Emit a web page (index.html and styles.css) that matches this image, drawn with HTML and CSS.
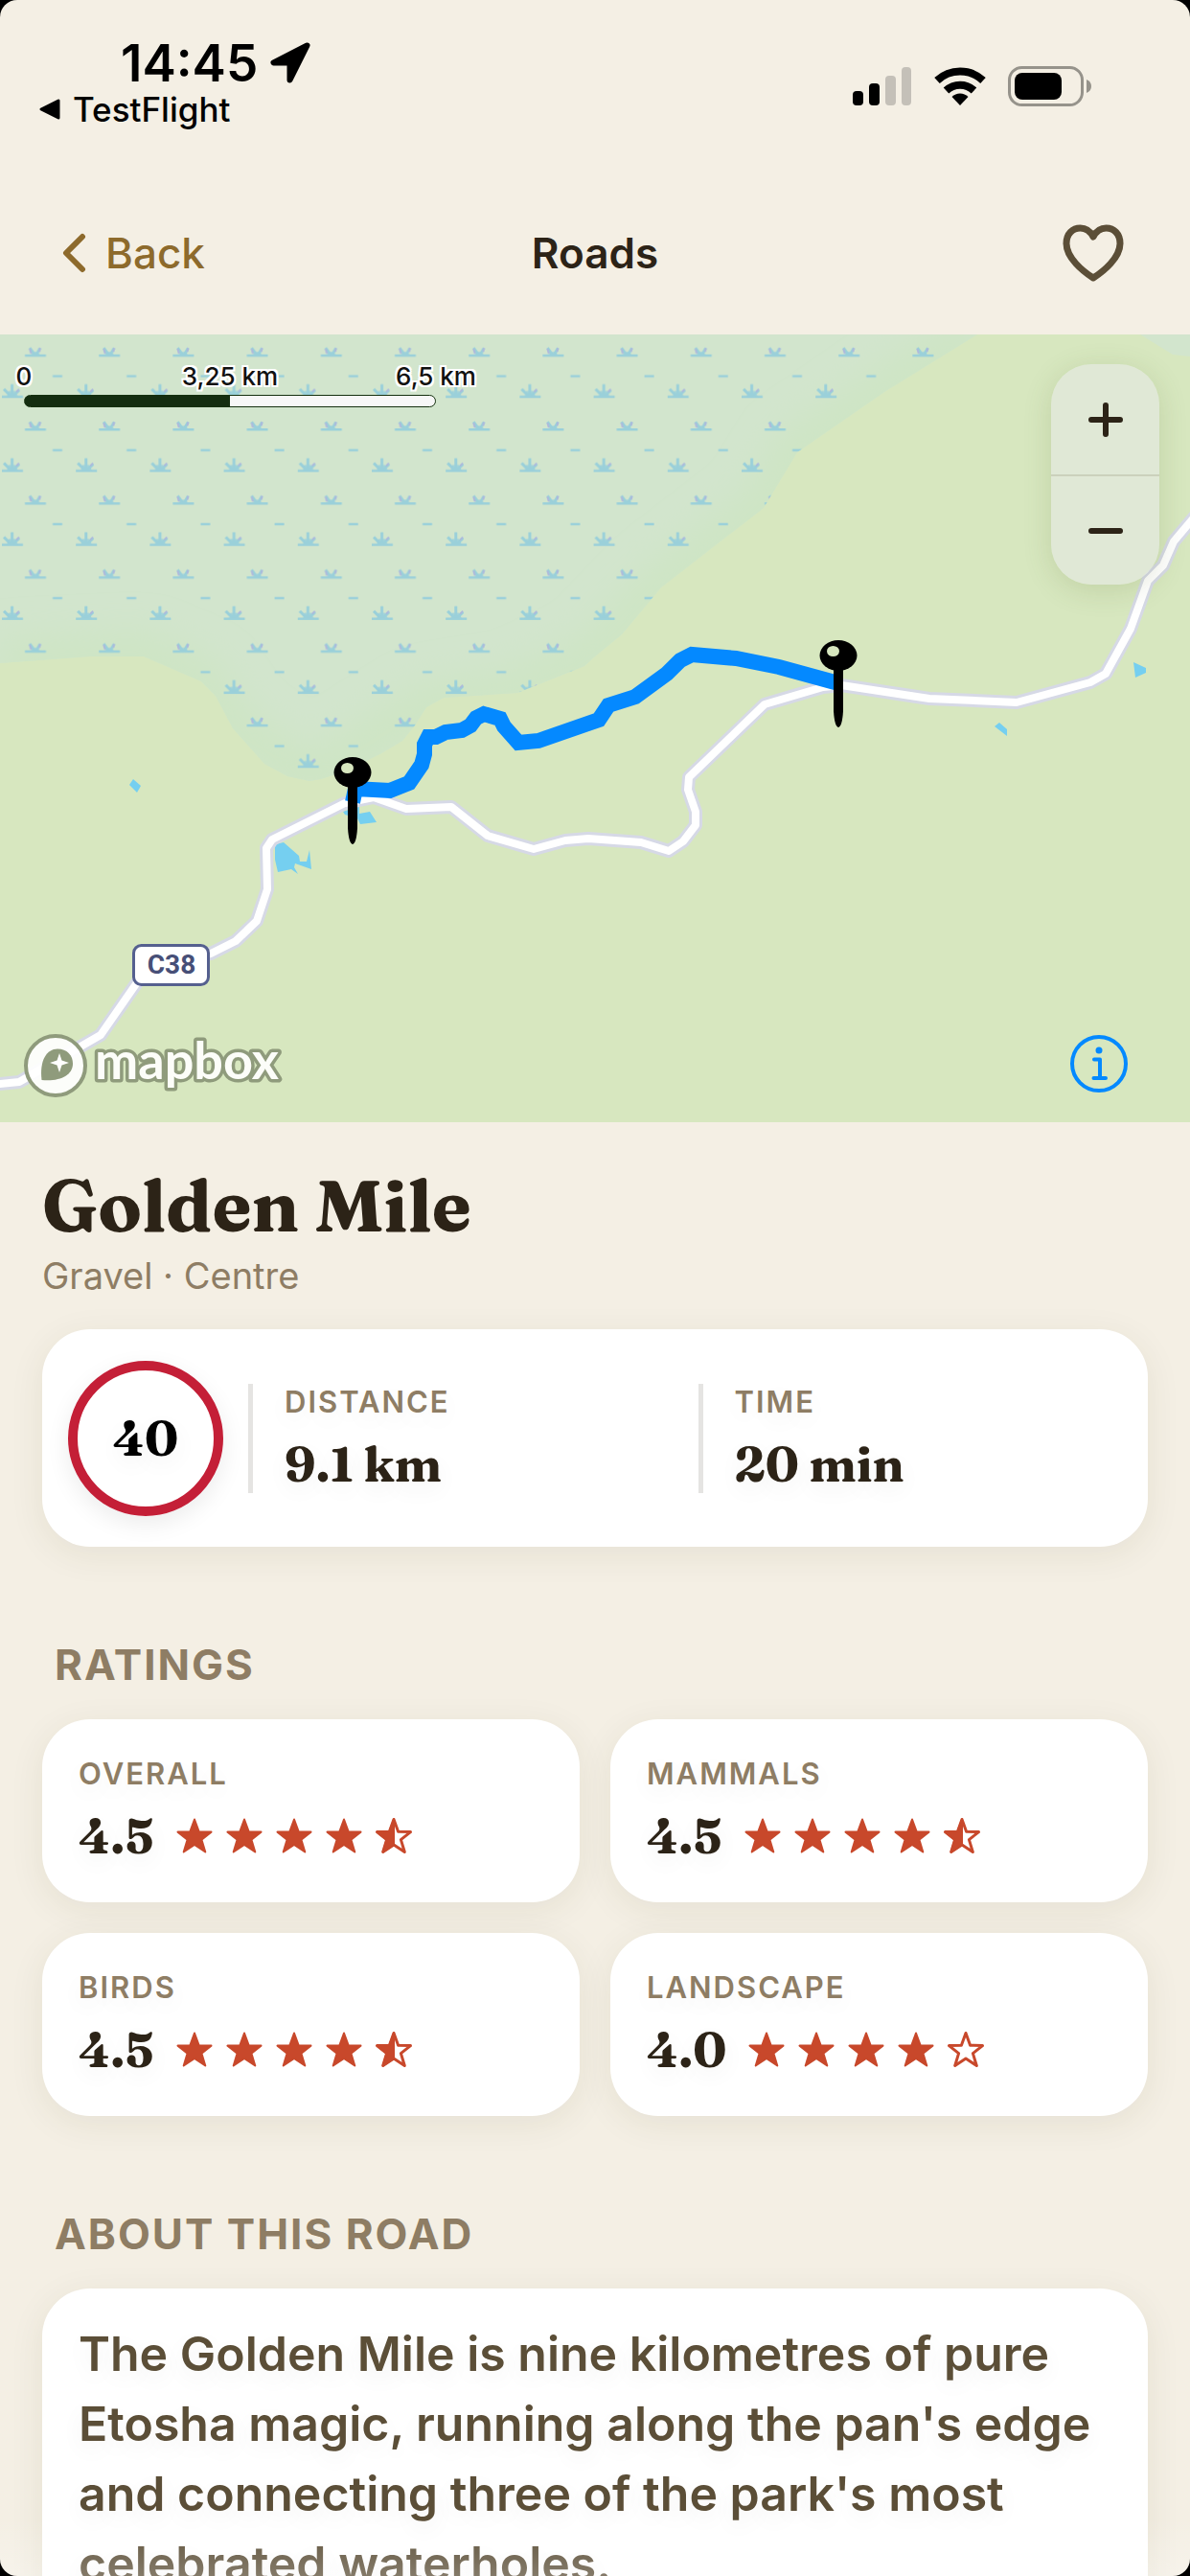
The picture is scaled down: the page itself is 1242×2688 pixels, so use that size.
FILE: index.html
```html
<!DOCTYPE html>
<html lang="en">
<head>
<meta charset="utf-8">
<meta name="viewport" content="width=device-width, initial-scale=1">
<title>Golden Mile</title>
<link rel="stylesheet" href="styles.css">
</head>
<body>
<svg class="defs" aria-hidden="true">
  <defs>
    <path id="star-shape" d="M20 2.500 L24.600 15.200 L37.500 15.600 L27.400 23.600 L31.300 36.500 L20 29 L8.700 36.500 L12.600 23.600 L2.500 15.600 L15.400 15.200 Z"/>
    <symbol id="star-full" viewBox="0 0 40 40"><use href="#star-shape" class="star-fill"/></symbol>
    <symbol id="star-half" viewBox="0 0 40 40">
      <use href="#star-shape" class="star-line"/>
      <path class="star-fill" d="M20 2.500 V29 L8.700 36.500 L12.600 23.600 L2.500 15.600 L15.400 15.200 Z"/>
    </symbol>
    <symbol id="star-empty" viewBox="0 0 40 40"><use href="#star-shape" class="star-line"/></symbol>
  </defs>
</svg>
<div class="screen">
  <header class="status">
    <div class="status-left">
      <div class="clock">
        <span>14:45</span>
        <svg width="44" height="44" viewBox="0 0 44 44" aria-hidden="true"><path d="M39.500 3.500 L4.500 21.500 H21.500 V39.500 Z" fill="#000" stroke="#000" stroke-width="6" stroke-linejoin="round"/></svg>
      </div>
      <a class="return-app" href="#">
        <svg width="24" height="24" viewBox="0 0 24 24" aria-hidden="true"><path d="M3 12 L21 3 V21 Z" fill="#000" stroke="#000" stroke-width="3" stroke-linejoin="round"/></svg>
        TestFlight
      </a>
    </div>
    <div class="status-right" aria-hidden="true">
      <svg width="62" height="42" viewBox="0 0 62 42">
        <rect x="0" y="26" width="11" height="15" rx="4"/><rect x="17" y="18" width="11" height="23" rx="4"/>
        <rect x="34" y="10" width="11" height="31" rx="4" fill="#c4c0b8"/><rect x="51" y="1" width="10" height="40" rx="4" fill="#c4c0b8"/>
      </svg>
      <svg width="54" height="42" viewBox="0 0 54 42">
        <path d="M3 15 A35 35 0 0 1 51 15" fill="none" stroke="#000" stroke-width="8"/>
        <path d="M12.500 25.500 A21 21 0 0 1 41.500 25.500" fill="none" stroke="#000" stroke-width="8"/>
        <path d="M27 41 L18.500 32 A12 12 0 0 1 35.500 32 Z"/>
      </svg>
      <svg width="88" height="42" viewBox="0 0 88 42">
        <rect x="1.500" y="1.500" width="76" height="39" rx="13" fill="none" stroke="#96938b" stroke-width="3"/>
        <rect x="7" y="7" width="49" height="28" rx="8"/>
        <path d="M82 14 Q87 16 87 21 Q87 26 82 28 Z" fill="#96938b"/>
      </svg>
    </div>
  </header>

  <nav class="bar">
    <a class="back" href="#">
      <svg width="26" height="42" viewBox="0 0 26 42" aria-hidden="true"><path d="M22 4 L5 21 L22 38" fill="none" stroke="#8d6a2c" stroke-width="6" stroke-linecap="round" stroke-linejoin="round"/></svg>
      Back
    </a>
    <h2 class="bar-title">Roads</h2>
    <button class="favourite" type="button" aria-label="Add to favourites">
      <svg width="66" height="62" viewBox="0 0 66 62" aria-hidden="true"><path d="M33 57 C22 50 5 36 5 21 C5 11 11.500 5 19.500 5 C25.500 5 30 8.500 33 14 C36 8.500 40.500 5 46.500 5 C54.500 5 61 11 61 21 C61 36 44 50 33 57 Z" fill="none" stroke="#5b4e37" stroke-width="7" stroke-linejoin="round"/></svg>
    </button>
  </nav>

  <section class="map" aria-label="Map of the road">
    <svg class="map-canvas" viewBox="0 349 1242 822" preserveAspectRatio="xMidYMid slice" aria-hidden="true">
      <defs>
        <pattern id="marsh" x="0" y="349" width="77.200" height="77.200" patternUnits="userSpaceOnUse">
          <g fill="none" stroke="#9ad0da" stroke-width="2.500">
            <path d="M26 22 H48 M55 43.500 H65 M2 65 H24"/>
            <path d="M36 21 L31 14 M38 21 L42 14 M12.600 64 V52 M11 64 L4 57 M14 64 L20 58" stroke-width="3"/>
          </g>
          <path d="M7 65 L9 59 L16 59 L19 65 Z M32 22 L34 18 L40 18 L42 22 Z" fill="#9ad0da" fill-opacity=".8"/>
          <path d="M32.500 20 L31 15 M41 18 L42 14 M17 60 L20 57" stroke="#adb9dc" stroke-width="2"/>
        </pattern>
        <path id="road" d="M-10 1132 L20 1129 L105 1080 L146 1021 L178 1000 L220 995 L246 982 L268 961 L279 928 L278 885 L284 876 L360 838 L390 832 L424 844 L471 842 L509 872 L557 886 L590 877 L614 875 L669 879 L698 888 L713 878 L726 861 L726 847 L718 824 L719 811 L798 735 L859 717 L878 715 L970 729 L1061 733 L1138 712 L1154 703 L1180 656 L1198 606 L1214 590 L1225 565 L1252 533"/>
        <path id="wetland" d="M0 349 H1020 L923 409 L832 472 L797 530 L690 613 L649 662 L621 685 L610 695 L540 723 L463 728 L445 738 L433 757 L420 773 L400 785 L365 803 L335 813 L323 815 L300 810 L276 797 L243 760 L225 726 L210 711 L150 685 L94 685 L0 692 Z M1190 349 L1224 370 L1242 372 V349 Z"/>
        <filter id="soft" x="-20%" y="-20%" width="140%" height="140%"><feGaussianBlur stdDeviation="18"/></filter>
        <clipPath id="wetland-clip"><use href="#wetland"/></clipPath>
        <g id="pin">
          <path d="M-5 10 H5 V58 Q4 74 0 75 Q-4 74 -5 58 Z"/>
          <ellipse rx="19.500" ry="16"/>
          <ellipse cx="-5.500" cy="-4.500" rx="6.500" ry="5.500" fill="#d7e7bf"/>
        </g>
      </defs>
      <rect y="349" width="1242" height="822" fill="#d7e7bf"/>
      <use href="#wetland" fill="#d2e5cd"/>
      <g clip-path="url(#wetland-clip)"><path d="M1020 349 L923 409 L832 472 L797 530 L690 613 L621 685 L540 723 L445 738 L323 815 L243 760 L210 711 L150 685 L0 692" fill="none" stroke="#cee5c4" stroke-width="50" filter="url(#soft)"/></g>
      <use href="#wetland" fill="url(#marsh)"/>
      <g fill="#75cff0">
        <path d="M135 819 L139 813 L147 820 L143 827 Z"/>
        <path d="M287 881 L296 879 L312 893 L313 899 L320 899 L323 887 L325 907 L308 901 L307 905 L311 912 L304 907 L290 910 L287 897 Z"/>
        <path d="M358 847 L375 841 V849 L386 847 L393 858 L376 860 L373 854 L360 850 Z"/>
        <path d="M1183 691 L1196 697 V702 L1185 707 Z"/>
        <path d="M1038 758 L1043 754 L1051 761 V768 Z"/>
      </g>
      <g fill="none" stroke-linejoin="round">
        <use href="#road" stroke="#d6d9e6" stroke-width="14"/>
        <use href="#road" stroke="#fff" stroke-width="8"/>
        <path d="M875 713 L813 696 L768 687 L722 683 L710 689 L696 703 L663 727 L635 736 L625 751 L562 773 L541 775 L526 758 L522 750 L505 745 L497 749 L491 757 L482 762 L465 764 L455 769 L447 769 L443 777 L443 787 L440 798 L427 817 L407 825 L371 823 L368 837" stroke="#0489ff" stroke-width="16" stroke-linejoin="miter"/>
      </g>
      <use href="#pin" x="875" y="684"/>
      <use href="#pin" x="368" y="806"/>
      <rect x="139.500" y="986.500" width="78" height="41" rx="8" fill="#fff" stroke="#55608f" stroke-width="3"/>
      <text class="shield" x="179" y="1016" text-anchor="middle">C38</text>
    </svg>

    <div class="scale">
      <div class="scale-labels"><span>0</span><span>3,25 km</span><span>6,5 km</span></div>
      <div class="scale-track"></div>
    </div>

    <div class="zoom">
      <button type="button" aria-label="Zoom in"><svg width="40" height="40" viewBox="0 0 40 40" aria-hidden="true"><path d="M5 20 H35 M20 5 V35"/></svg></button>
      <button type="button" aria-label="Zoom out"><svg width="40" height="40" viewBox="0 0 40 40" aria-hidden="true"><path d="M5 20 H35"/></svg></button>
    </div>

    <a class="mapbox" href="#" aria-label="Mapbox">
      <svg width="276" height="84" viewBox="0 -8 276 84">
        <circle cx="34" cy="34" r="31" fill="#fff" fill-opacity=".92" stroke="#8f9b7c" stroke-width="4"/>
        <path d="M19.500 49 C17 28 25 16.500 36 16.500 C46 16.500 52 23 52 32 C52 44 38 51 19.500 49 Z" fill="#8f9b7c"/>
        <path d="M38 21 L40.500 28.500 L48 31 L40.500 33.500 L38 41 L35.500 33.500 L28 31 L35.500 28.500 Z" fill="#fff"/>
        <text class="wordmark" x="75" y="48">mapbox</text>
      </svg>
    </a>

    <button class="info" type="button" aria-label="Map information">
      <svg width="62" height="62" viewBox="0 0 62 62" aria-hidden="true"><g fill="none" stroke="#0489ff" stroke-width="4" stroke-linecap="round" stroke-linejoin="round"><circle cx="31" cy="31" r="28"/><path d="M26 26.500 H32 V46 M25.500 46 H38"/></g><circle cx="31" cy="17" r="3.500" fill="#0489ff"/></svg>
    </button>
  </section>

  <main class="content">
    <h1 class="title">Golden Mile</h1>
    <p class="subtitle">Gravel · Centre</p>

    <div class="card facts">
      <div class="limit">40</div>
      <div class="fact"><span class="label">DISTANCE</span><span class="value">9.1 km</span></div>
      <div class="fact"><span class="label">TIME</span><span class="value">20 min</span></div>
    </div>

    <h2 class="heading">RATINGS</h2>
    <div class="ratings">
      <div class="card rating">
        <span class="label">OVERALL</span>
        <div class="score"><span class="value">4.5</span>
          <span class="stars"><svg><use href="#star-full"/></svg><svg><use href="#star-full"/></svg><svg><use href="#star-full"/></svg><svg><use href="#star-full"/></svg><svg><use href="#star-half"/></svg></span></div>
      </div>
      <div class="card rating">
        <span class="label">MAMMALS</span>
        <div class="score"><span class="value">4.5</span>
          <span class="stars"><svg><use href="#star-full"/></svg><svg><use href="#star-full"/></svg><svg><use href="#star-full"/></svg><svg><use href="#star-full"/></svg><svg><use href="#star-half"/></svg></span></div>
      </div>
      <div class="card rating">
        <span class="label">BIRDS</span>
        <div class="score"><span class="value">4.5</span>
          <span class="stars"><svg><use href="#star-full"/></svg><svg><use href="#star-full"/></svg><svg><use href="#star-full"/></svg><svg><use href="#star-full"/></svg><svg><use href="#star-half"/></svg></span></div>
      </div>
      <div class="card rating">
        <span class="label">LANDSCAPE</span>
        <div class="score"><span class="value">4.0</span>
          <span class="stars"><svg><use href="#star-full"/></svg><svg><use href="#star-full"/></svg><svg><use href="#star-full"/></svg><svg><use href="#star-full"/></svg><svg><use href="#star-empty"/></svg></span></div>
      </div>
    </div>

    <h2 class="heading">ABOUT THIS ROAD</h2>
    <div class="card about">
      <p>The Golden Mile is nine kilometres of pure Etosha magic, running along the pan's edge and connecting three of the park's most celebrated waterholes.</p>
    </div>
  </main>
  <div class="fade"></div>
</div>
</body>
</html>
```
FILE: styles.css
```css
* { box-sizing: border-box; }

html, body { height: 100%; }

body {
  margin: 0;
  background: #000;
  color: #2c2317;
  font-family: Inter, "Liberation Sans", sans-serif;
}

h1, h2, p { margin: 0; }
a { color: inherit; text-decoration: none; }
svg { display: block; }

button {
  padding: 0;
  border: 0;
  background: none;
  cursor: pointer;
}

.defs { position: absolute; width: 0; height: 0; }

.screen {
  position: relative;
  display: flex;
  flex-direction: column;
  height: 100vh;
  overflow: hidden;
  background: #f4efe4;
  border-radius: 18px;
}

/* Status bar */
.status {
  display: flex;
  justify-content: space-between;
  flex: none;
  height: 180px;
  padding: 36px 102px 0 40px;
  color: #000;
}

.clock {
  display: flex;
  align-items: center;
  gap: 12px;
  height: 60px;
  padding-left: 86px;
  font-size: 53px;
  font-weight: 600;
  line-height: 60px;
}

.return-app {
  display: flex;
  align-items: center;
  gap: 12px;
  font-size: 35px;
  font-weight: 500;
  line-height: 36px;
}

.status-right {
  display: flex;
  gap: 23px;
  padding-top: 33px;
}

/* Navigation bar */
.bar {
  display: grid;
  grid-template-columns: 1fr auto 1fr;
  align-items: center;
  flex: none;
  height: 169px;
  padding: 0 68px 1px;
}

.back {
  display: flex;
  align-items: center;
  gap: 20px;
  margin-left: -4px;
  color: #8d6a2c;
  font-size: 44px;
  font-weight: 500;
  line-height: 56px;
}

.bar-title {
  font-size: 44px;
  font-weight: 600;
  line-height: 56px;
}

.favourite { justify-self: end; }

/* Map */
.map {
  position: relative;
  flex: none;
  height: 822px;
  overflow: hidden;
}

.map-canvas { width: 100%; height: 100%; }

.shield {
  fill: #474f77;
  font-family: Roboto, sans-serif;
  font-size: 28px;
  font-weight: 700;
}

.scale {
  position: absolute;
  top: 30px;
  left: 25px;
  width: 430px;
}

/* Each label is centred on its mark: start, middle and end of the track */
.scale-labels {
  display: grid;
  grid-template-columns: 1fr 1fr 1fr;
  margin: 0 -25%;
  color: #111;
  font-size: 26px;
  font-weight: 500;
  line-height: 28px;
  text-align: center;
  text-shadow: 2px 0 #fff, -2px 0 #fff, 0 2px #fff, 0 -2px #fff, 2px 2px #fff, -2px -2px #fff, 2px -2px #fff, -2px 2px #fff;
}

.scale-track {
  height: 13px;
  margin-top: 5px;
  border: 1px solid #15300f;
  border-radius: 7px;
  background: linear-gradient(90deg, #142d10 50%, #f7f7f7 50%);
}

.zoom {
  position: absolute;
  top: 31px;
  right: 32px;
  width: 113px;
  border-radius: 42px;
  background: rgba(226, 232, 220, .8);
  box-shadow: 0 6px 30px rgba(80, 100, 30, .16);
}

.zoom button {
  display: grid;
  place-items: center;
  width: 100%;
  height: 115px;
}

.zoom button + button { border-top: 2px solid #cbd1bc; }

.zoom path {
  stroke: #2c2317;
  stroke-width: 6;
  stroke-linecap: round;
}

.mapbox {
  position: absolute;
  bottom: 17px;
  left: 24px;
}

.wordmark {
  fill: #fcfdf9;
  stroke: #8f9b7c;
  stroke-width: 7px;
  stroke-linejoin: round;
  paint-order: stroke;
  font-family: Lato, sans-serif;
  font-size: 54px;
  font-weight: 700;
}

.info {
  position: absolute;
  right: 64px;
  bottom: 30px;
}

/* Road details */
.content {
  flex: 1;
  min-height: 0;
  padding: 42px 44px 0;
  overflow-y: auto;
  scrollbar-width: none;
}

.title, .value, .limit {
  font-family: Fraunces, "Liberation Serif", serif;
  font-weight: 700;
}

.title {
  font-size: 75px;
  line-height: 90px;
}

.subtitle {
  margin-top: 4px;
  color: #8e7d64;
  font-size: 38px;
  line-height: 48px;
}

.card {
  border-radius: 50px;
  background: #fff;
  box-shadow: 0 8px 36px rgba(70, 60, 20, .08);
  text-shadow: 0 8px 24px rgba(0, 0, 0, .06);
}

.facts {
  display: flex;
  align-items: center;
  height: 227px;
  margin-top: 32px;
  padding-left: 27px;
}

.limit {
  display: grid;
  place-items: center;
  width: 162px;
  height: 162px;
  margin-right: 26px;
  border: 10px solid #c41f37;
  border-radius: 50%;
  box-shadow: 0 8px 24px rgba(0, 0, 0, .08);
  color: #000;
  font-size: 50px;
}

.fact {
  display: flex;
  flex: 1;
  flex-direction: column;
  gap: 16px;
  height: 114px;
  padding-left: 33px;
  border-left: 5px solid #e5e4e2;
}

.label {
  color: #8e7d64;
  font-size: 31px;
  font-weight: 600;
  letter-spacing: 2px;
  line-height: 38px;
}

.value {
  font-size: 50px;
  line-height: 60px;
}

.heading {
  margin: 96px 0 30px 13px;
  color: #8e7d64;
  font-size: 44px;
  font-weight: 700;
  letter-spacing: 2px;
  line-height: 54px;
}

.ratings {
  display: grid;
  grid-template-columns: 1fr 1fr;
  gap: 32px;
}

.rating {
  display: flex;
  flex-direction: column;
  gap: 16px;
  height: 191px;
  padding: 38px 38px 0;
}

.score {
  display: flex;
  align-items: center;
  gap: 22px;
}

.stars { display: flex; gap: 12px; }
.stars svg { width: 40px; height: 40px; }

.star-fill {
  fill: #c8482b;
  stroke: #c8482b;
  stroke-width: 2;
  stroke-linejoin: round;
}

.star-line {
  fill: none;
  stroke: #c8482b;
  stroke-width: 3;
  stroke-linejoin: round;
}

.about {
  padding: 32px 38px 48px;
  color: #5b4e37;
  font-size: 50px;
  font-weight: 600;
  line-height: 73px;
}

.fade {
  position: absolute;
  right: 0;
  bottom: 0;
  left: 0;
  height: 60px;
  background: linear-gradient(rgba(255, 255, 255, 0), rgba(255, 255, 255, .25));
  pointer-events: none;
}
```
